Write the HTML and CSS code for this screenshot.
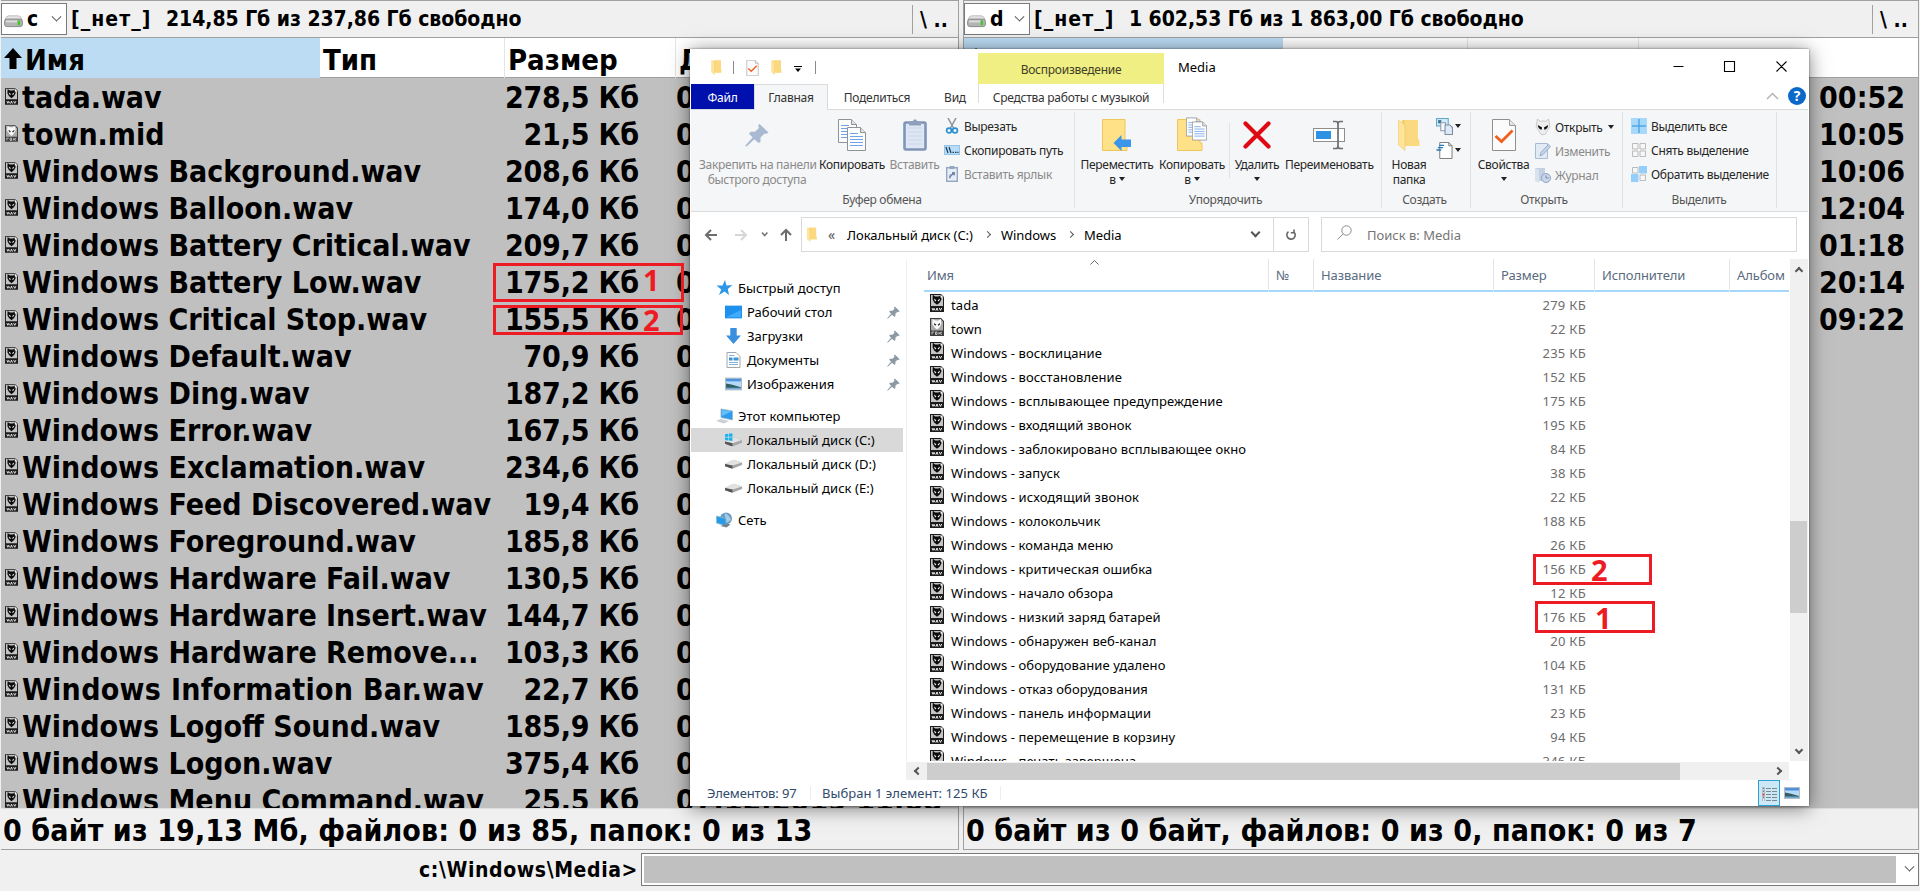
FILE: index.html
```html
<!DOCTYPE html>
<html lang="ru">
<head>
<meta charset="utf-8">
<title>Media</title>
<link rel="stylesheet" href="styles.css">
</head>
<body>
<svg class="defs" width="0" height="0">
  <symbol id="i-wav" viewBox="0 0 14 18">
    <path d="M0 0H11L14 3V18H0Z" fill="#1c1c1c"/><path d="M1 1H10.5L13 3.5V12H1Z" fill="#c4c4c4"/>
    <path d="M2.8 .8L5.2 2.6H8.8L11 .8L11.4 5.500L9.800 8.500L7 10.800L4.200 8.500L2.600 5.500Z" fill="#0c0c0c"/>
    <path d="M4 4.6L6.3 6.2L5.8 7.4L4.600 6.6ZM10 4.6L7.7 6.2L8.2 7.4L9.400 6.6Z" fill="#eee"/><path d="M10.5 0.5V3.5H13.5Z" fill="#fff"/>
    <path d="M2 14L3 16.300L4 14.300L5 16.300M6 16.6L7 14L8 16.6M9.3 14L10.5 16.4L11.7 14" fill="none" stroke="#eee"/>
  </symbol>
  <symbol id="i-mid" viewBox="0 0 14 18">
    <path d="M0 0H11L14 3V18H0Z" fill="#3c3c3c"/><path d="M1 1H10.5L13 3.5V12.500H1Z" fill="#a9a9a9"/>
    <path d="M2.6 1L5.4 2.4H8.2L11 1L11.4 6L9.4 9.4L7 11.6L4.6 9.4L2.2 6Z" fill="#f8f8f8"/>
    <path d="M3.8 5L6.3 6.600L5.4 7.800L4.200 6.8ZM10.2 5L7.7 6.600L8.4 7.800L9.800 6.8Z" fill="#222"/>
    <path d="M2 16.5V14H4M5.5 14H7V16.5H5.5V14M9 14V16.5M12 14L9.5 15.3L12 16.5" fill="none" stroke="#ccc" stroke-width=".9"/>
  </symbol>
  <symbol id="i-drive" viewBox="0 0 20 16">
    <path d="M1 7Q2 3 5 3H15Q18 3 19 7Z" fill="#e4e4e4" stroke="#bbb"/><rect x="0.5" y="6.5" width="19" height="8" rx="2.500" fill="#b4b4b4" stroke="#858585"/><path d="M2 8H14V10H2Z" fill="#ddd"/><rect x="14.500" y="8" width="2.500" height="5" fill="#40c828"/>
  </symbol>
  <symbol id="i-folder" viewBox="0 0 22 32">
    <path d="M4 1H20V26H4Z" fill="#f5cf6a"/><path d="M7 1H20V20L21.5 21V27H7Z" fill="#fbd980"/><path d="M0.5 1L7 6V31.5L0.5 26Z" fill="#ffe49a" stroke="#efc766" stroke-width=".6"/>
  </symbol>
  <symbol id="i-doccheck" viewBox="0 0 24 32">
    <path d="M.5 .5H17.5L23.5 6.5V31.5H.5Z" fill="#fbfbfb" stroke="#8f8f8f"/><path d="M17.5 .5V6.5H23.5" fill="#e5e5e5" stroke="#9a9a9a"/><path d="M3.5 17L9.5 22.5L20.5 11.5" fill="none" stroke="#f0601c" stroke-width="2.8"/>
  </symbol>
  <symbol id="i-page" viewBox="0 0 19 24">
    <path d="M.5 .5H13.5L18.5 5.5V23.5H.5Z" fill="#fdfdfd" stroke="#8f9296"/><path d="M13.5 .5V5.5H18.5" fill="#e2e2e2" stroke="#8f9296"/><path d="M3 6.5H11M3 9.5H16M3 12.5H16M3 15.5H16M3 18.5H16" stroke="#6ea4e8"/>
  </symbol>
  <symbol id="i-pages" viewBox="0 0 28 32">
    <use href="#i-page" x="0" y="0" width="19" height="24"/><use href="#i-page" x="9" y="8" width="19" height="24"/>
  </symbol>
  <symbol id="i-pin" viewBox="0 0 24 24">
    <path d="M14.5 1L23.5 9.5L21 11L19.5 10.5L15.5 14.5L15.5 19L13.5 20L9.3 16.2L1.5 23.5L.5 23.2L.8 22L7.6 14.5L4 10.8L5.5 8.8L10 8.8L14 5L13 2.5Z"/>
  </symbol>
  <symbol id="i-clip" viewBox="0 0 24 32">
    <rect x="1.5" y="3.5" width="21" height="27" rx="1.5" fill="#dde6f4" stroke="#8094b8" stroke-width="2.6"/><path d="M5 9H19M5 13H19M5 17H19M5 21H19M5 25H19" stroke="#c9d5e9"/><path d="M6 2.5H9.5L11 .5H13L14.5 2.5H18V6.5H6Z" fill="#8f9fba"/>
  </symbol>
  <symbol id="i-sciss" viewBox="0 0 16 16">
    <path d="M4 0L9.5 10M12 0L6.5 10" stroke="#8b9299" stroke-width="1.5"/><circle cx="5" cy="12.5" r="2.4" fill="none" stroke="#2d90d0" stroke-width="1.7"/><circle cx="11" cy="12.5" r="2.4" fill="none" stroke="#2d90d0" stroke-width="1.7"/>
  </symbol>
  <symbol id="i-path" viewBox="0 0 16 10"><rect x=".5" y=".5" width="15" height="9" fill="#b6dcf8" stroke="#94c4e8"/><path d="M2 2L4 8M5 2L7 8M8.5 7.3H10M11 7.3H12.5M13.3 7.3H14.5" stroke="#1d3b58" stroke-width="1.2"/></symbol>
  <symbol id="i-link" viewBox="0 0 12 16"><rect x=".7" y="1.7" width="10.6" height="13.6" fill="#e6edf7" stroke="#94a6c0" stroke-width="1.4"/><path d="M3.5 0H8.5V3H3.5Z" fill="#94a6c0"/><path d="M3 12Q3 8 6 8V6H9V9.5L7.6 9Q5 9 4.5 12.500Z" fill="#7387ab"/></symbol>
  <symbol id="i-move" viewBox="0 0 30 32"><path d="M.5 .5H23V24H25V31.5H.5Z" fill="#ffe188" stroke="#edc65c"/><path d="M11.500 24L19.500 16V20.500H29V28H19.500V32Z" fill="#3a96e8"/></symbol>
  <symbol id="i-copyto" viewBox="0 0 30 34"><path d="M.5 2.500H23V26H25V33.500H.5Z" fill="#ffe188" stroke="#edc65c"/><use href="#i-page" x="9" y="0" width="15" height="20"/><use href="#i-page" x="15" y="4" width="15" height="20"/></symbol>
  <symbol id="i-del" viewBox="0 0 28 28"><path d="M2.500 2.500L25.500 25.500M25.500 2.500L2.500 25.500" stroke="#dd0a14" stroke-width="4.200" stroke-linecap="round"/></symbol>
  <symbol id="i-ren" viewBox="0 0 32 30"><rect x=".5" y="8.500" width="31" height="13" fill="#fff" stroke="#8e8e8e"/><rect x="3" y="11" width="15" height="8" fill="#2e91e2"/><path d="M25 3V27M20 1.500H23Q25 1.500 25 4Q25 1.500 27 1.500H30M20 28.500H23Q25 28.500 25 26Q25 28.500 27 28.500H30" stroke="#6d6d6d" stroke-width="1.700" fill="none"/></symbol>
  <symbol id="i-new1" viewBox="0 0 16 16"><rect x=".5" y=".5" width="11" height="7" fill="#d3ecf9" stroke="#5fa6c8"/><rect x="2" y="2" width="3" height="3" fill="#39748c"/><path d="M4.500 4.500H9V12H4.500Z" fill="#f6fafd" stroke="#8a9cad"/><path d="M8.500 6.500H13L15.500 9V15.500H8.500Z" fill="#dbe9fb" stroke="#828c99"/></symbol>
  <symbol id="i-new2" viewBox="0 0 17 18"><path d="M3.500 .5H13L16.500 4V17.500H3.500Z" fill="#fff" stroke="#777"/><path d="M13 .5V4H16.500" fill="none" stroke="#777"/><path d="M3 3.500H8M1.500 6H7M0 8.500H5" stroke="#2877b6" stroke-width="1.400"/></symbol>
  <symbol id="i-alien" viewBox="0 0 15 17"><path d="M1.500 0L4.500 2.500Q7.500 1.500 10.500 2.500L13.500 0L14.800 8L12 12.500L9.500 16.500H5.500L3 12.500L.2 8Z" fill="#eee" stroke="#aaa" stroke-width=".6"/><path d="M2 6.500L6.500 9L6 11.500Q2.500 11 2 6.500ZM13 6.500L8.500 9L9 11.500Q12.500 11 13 6.500Z" fill="#111"/></symbol>
  <symbol id="i-edit" viewBox="0 0 16 16"><path d="M.5 .5H12.500V15.500H.5Z" fill="#e2eaf5" stroke="#a9bad4"/><path d="M5 13L6 9.500L13.500 1.500L15.500 3.500L8 11.500Z" fill="#c8d5e8" stroke="#95aac9"/></symbol>
  <symbol id="i-hist" viewBox="0 0 16 16"><path d="M0 1H10V14H0Z" fill="#c3cfe2"/><path d="M0 1L4 3V16L0 14Z" fill="#d9e2ef"/><circle cx="11" cy="11" r="4.500" fill="#c9d6ea" stroke="#8fa3c3"/><path d="M11 8.500V11H13.500" stroke="#7388ad" fill="none"/></symbol>
  <symbol id="i-selall" viewBox="0 0 16 16"><path d="M0 0H16V16H0Z" fill="#a8d9fb"/><path d="M8 1V15M1 8H15" stroke="#4fa6e4" stroke-width="1.400"/></symbol>
  <symbol id="i-selnone" viewBox="0 0 16 16"><path d="M1.500 1.500H7V7H1.500ZM9 1.500H14.500V7H9ZM1.500 9H7V14.500H1.500ZM9 9H14.500V14.500H9Z" fill="#f7f7f7" stroke="#bbb"/></symbol>
  <symbol id="i-selinv" viewBox="0 0 16 16"><path d="M1.500 1.500H7V7H1.500ZM9 9H14.500V14.500H9Z" fill="#f7f7f7" stroke="#bbb"/><path d="M8 0H16V7.500H8ZM0 8H7.500V16H0Z" fill="#93cffa"/></symbol>
  <symbol id="i-star" viewBox="0 0 16 16"><path d="M8.500 0L10 5.500L16 5L11.300 9L12.500 15L8 11.500L2.500 15L4.700 9.500L0 5.500L6 5.500Z" fill="#2f97e8"/></symbol>
  <symbol id="i-desk" viewBox="0 0 16 12"><rect width="16" height="12" fill="#1e90ee"/><path d="M1 11L15 4V11Z" fill="#40aafc"/></symbol>
  <symbol id="i-down" viewBox="0 0 14 15"><path d="M4 0H10V7H14L7 15L0 7H4Z" fill="#3a8fde"/></symbol>
  <symbol id="i-docs" viewBox="0 0 14 16"><path d="M.5 .5H9.500L13.500 4.500V15.500H.5Z" fill="#fff" stroke="#a0a7ad"/><path d="M2.500 3.500H8M2.500 10.500H11.500M2.500 12.500H11.500" stroke="#86b3dc"/><path d="M2.500 5.500H6V8.500H2.500ZM7 5.500H12V8.500H7Z" fill="#3e93d0"/></symbol>
  <symbol id="i-pics" viewBox="0 0 16 12"><rect x=".5" y=".5" width="15" height="11" fill="#b4daf8" stroke="#b6bcc3"/><path d="M1 1H15V3.500H1Z" fill="#4e91dc"/><path d="M1 5.500L6 6.500L15 9V10H1Z" fill="#315f63"/><path d="M1 9.500H15V11H1Z" fill="#70a9d4"/></symbol>
  <symbol id="i-pc" viewBox="0 0 17 16"><path d="M5 1L16.500 3V12L5 9.500Z" fill="#2d9cec" stroke="#9db5c9" stroke-width=".8"/><path d="M6 2L15.500 3.500L6 8Z" fill="#63c0fb"/><path d="M0 13L5 11L13 13L8 15.500Z" fill="#c9cfd4"/></symbol>
  <symbol id="i-disk" viewBox="0 0 16 9"><path d="M0 4.500L8 .5L16 3V5.500L7 9L0 6.500Z" fill="#a6a6a6"/><path d="M0 4.500L8 .5L16 3L7 6Z" fill="#e3e3e3"/><path d="M0 4.500L7 6V9L0 6.500Z" fill="#555"/></symbol>
  <symbol id="i-diskc" viewBox="0 0 16 12"><use href="#i-disk" y="3" width="16" height="9"/><path d="M0 .6L3 .2V3H0ZM3.600 .1L7 -.3V3H3.600ZM0 3.600H3V6.400L0 6ZM3.600 3.600H7V7L3.600 6.500Z" fill="#16b4ee"/></symbol>
  <symbol id="i-net" viewBox="0 0 16 16"><circle cx="9.500" cy="6.500" r="6" fill="#6a9cc4"/><path d="M8 1Q13 3 14.500 8L10 11Z" fill="#a6cbe2"/><path d="M0 4L9.500 6.500V14L0 11Z" fill="#299ae8" stroke="#8db9d9" stroke-width=".8"/><path d="M4 14L10 15.500L14 12.500L10 11.500Z" fill="#75828d"/></symbol>
</svg>

<main class="desktop">
  <section class="panel">
    <div class="drivebar"><div class="drive"><svg><use href="#i-drive"/></svg><b>c</b><i class="chev"></i></div><span class="label">[_нет_]</span><span class="free">214,85 Гб из 237,86 Гб свободно</span><span class="root">\&nbsp;<span class="up">..</span></span></div>
    <div class="heads"><span class="on"><svg class="sort" viewBox="0 0 18 21"><path d="M9 0L18 10H12.500V21H5.500V10H0Z"/></svg>Имя</span><span>Тип</span><span>Размер</span><span>Дата</span></div>
    <div class="files">
      <div class="file"><svg><use href="#i-wav"/></svg><span>tada.wav</span><span class="size">278,5 Кб</span><span class="date">07.12.2019 11:08</span></div>
      <div class="file"><svg><use href="#i-mid"/></svg><span>town.mid</span><span class="size">21,5 Кб</span><span class="date">07.12.2019 11:08</span></div>
      <div class="file"><svg><use href="#i-wav"/></svg><span>Windows Background.wav</span><span class="size">208,6 Кб</span><span class="date">07.12.2019 11:08</span></div>
      <div class="file"><svg><use href="#i-wav"/></svg><span>Windows Balloon.wav</span><span class="size">174,0 Кб</span><span class="date">07.12.2019 11:08</span></div>
      <div class="file"><svg><use href="#i-wav"/></svg><span>Windows Battery Critical.wav</span><span class="size">209,7 Кб</span><span class="date">07.12.2019 11:08</span></div>
      <div class="file"><svg><use href="#i-wav"/></svg><span>Windows Battery Low.wav</span><span class="size">175,2 Кб</span><span class="date">07.12.2019 11:08</span></div>
      <div class="file"><svg><use href="#i-wav"/></svg><span>Windows Critical Stop.wav</span><span class="size">155,5 Кб</span><span class="date">07.12.2019 11:08</span></div>
      <div class="file"><svg><use href="#i-wav"/></svg><span>Windows Default.wav</span><span class="size">70,9 Кб</span><span class="date">07.12.2019 11:08</span></div>
      <div class="file"><svg><use href="#i-wav"/></svg><span>Windows Ding.wav</span><span class="size">187,2 Кб</span><span class="date">07.12.2019 11:08</span></div>
      <div class="file"><svg><use href="#i-wav"/></svg><span>Windows Error.wav</span><span class="size">167,5 Кб</span><span class="date">07.12.2019 11:08</span></div>
      <div class="file"><svg><use href="#i-wav"/></svg><span>Windows Exclamation.wav</span><span class="size">234,6 Кб</span><span class="date">07.12.2019 11:08</span></div>
      <div class="file"><svg><use href="#i-wav"/></svg><span>Windows Feed Discovered.wav</span><span class="size">19,4 Кб</span><span class="date">07.12.2019 11:08</span></div>
      <div class="file"><svg><use href="#i-wav"/></svg><span>Windows Foreground.wav</span><span class="size">185,8 Кб</span><span class="date">07.12.2019 11:08</span></div>
      <div class="file"><svg><use href="#i-wav"/></svg><span>Windows Hardware Fail.wav</span><span class="size">130,5 Кб</span><span class="date">07.12.2019 11:08</span></div>
      <div class="file"><svg><use href="#i-wav"/></svg><span>Windows Hardware Insert.wav</span><span class="size">144,7 Кб</span><span class="date">07.12.2019 11:08</span></div>
      <div class="file"><svg><use href="#i-wav"/></svg><span>Windows Hardware Remove...</span><span class="size">103,3 Кб</span><span class="date">07.12.2019 11:08</span></div>
      <div class="file"><svg><use href="#i-wav"/></svg><span class="wide">Windows Information Bar.wav</span><span class="size">22,7 Кб</span><span class="date">07.12.2019 11:08</span></div>
      <div class="file"><svg><use href="#i-wav"/></svg><span>Windows Logoff Sound.wav</span><span class="size">185,9 Кб</span><span class="date">07.12.2019 11:08</span></div>
      <div class="file"><svg><use href="#i-wav"/></svg><span>Windows Logon.wav</span><span class="size">375,4 Кб</span><span class="date">07.12.2019 11:08</span></div>
      <div class="file"><svg><use href="#i-wav"/></svg><span>Windows Menu Command.wav</span><span class="size">25,5 Кб</span><span class="date">07.12.2019 11:08</span></div>
    </div>
    <div class="total">0 байт из 19,13 Мб, файлов: 0 из 85, папок: 0 из 13</div>
  </section>
  <section class="panel">
    <div class="drivebar"><div class="drive"><svg><use href="#i-drive"/></svg><b>d</b><i class="chev"></i></div><span class="label">[_нет_]</span><span class="free">1 602,53 Гб из 1 863,00 Гб свободно</span><span class="root">\&nbsp;<span class="up">..</span></span></div>
    <div class="heads"><span class="on"><svg class="sort" viewBox="0 0 18 21"><path d="M9 0L18 10H12.500V21H5.500V10H0Z"/></svg>Имя</span><span>Тип</span><span>Размер</span><span>Дата</span></div>
    <div class="files times"><span>00:52</span><span>10:05</span><span>10:06</span><span>12:04</span><span>01:18</span><span>20:14</span><span>09:22</span></div>
    <div class="total">0 байт из 0 байт, файлов: 0 из 0, папок: 0 из 7</div>
  </section>
  <footer class="cmd"><span>c:\Windows\Media&gt;</span><div class="input"><i class="chev"></i></div></footer>
</main>

<section class="window">
  <header class="title">
    <div class="quick"><svg class="qf"><use href="#i-folder"/></svg><i></i><svg class="qd"><use href="#i-doccheck"/></svg><svg class="qf"><use href="#i-folder"/></svg><svg class="qc" viewBox="0 0 8 6"><path d="M0 .5H8" stroke="#000"/><path d="M1 2.500H7L4 6Z"/></svg><i></i></div>
    <div class="context">Воспроизведение</div>
    <div class="name">Media</div>
    <svg class="sysbtns" viewBox="0 0 134 34"><path d="M.5 17.500H10.500M51.500 12.500H61.500V22.500H51.500ZM103.500 12.500L113.500 22.500M113.500 12.500L103.500 22.500" fill="none" stroke="#000" stroke-width="1.100"/></svg>
  </header>
  <nav class="tabs">
    <span class="tfile">Файл</span><span class="thome">Главная</span><span class="tshare">Поделиться</span><span class="tview">Вид</span><span class="tmusic">Средства работы с музыкой</span>
    <svg class="help" viewBox="0 0 40 20"><path d="M1 13L6.500 7.500L12 13" fill="none" stroke="#b5b5b5" stroke-width="1.500"/><circle cx="31" cy="10" r="9" fill="#0a68c8"/><text x="31" y="15" text-anchor="middle">?</text></svg>
  </nav>
  <div class="ribbon">
    <div class="group g1">
      <div class="tools">
        <div class="big off"><svg class="pin"><use href="#i-pin"/></svg>Закрепить на панели<br>быстрого доступа</div>
        <div class="big"><svg class="w28"><use href="#i-pages"/></svg>Копировать</div>
        <div class="big off"><svg class="w24"><use href="#i-clip"/></svg>Вставить</div>
        <div class="small"><span><svg><use href="#i-sciss"/></svg>Вырезать</span><span><svg><use href="#i-path"/></svg>Скопировать путь</span><span class="off"><svg><use href="#i-link"/></svg>Вставить ярлык</span></div>
      </div>
      <div class="caption">Буфер обмена</div>
    </div>
    <div class="group g2">
      <div class="tools">
        <div class="big"><svg class="w30"><use href="#i-move"/></svg>Переместить<br>в <i class="tri"></i></div>
        <div class="big"><svg class="w30 tall"><use href="#i-copyto"/></svg>Копировать<br>в <i class="tri"></i></div>
        <div class="big split"><svg class="w28"><use href="#i-del"/></svg>Удалить<br><i class="tri"></i></div>
        <div class="big"><svg class="w32"><use href="#i-ren"/></svg>Переименовать</div>
      </div>
      <div class="caption">Упорядочить</div>
    </div>
    <div class="group g3">
      <div class="tools">
        <div class="big"><svg class="w22"><use href="#i-folder"/></svg>Новая<br>папка</div>
        <div class="mini"><span><svg><use href="#i-new1"/></svg><i class="tri"></i></span><span><svg><use href="#i-new2"/></svg><i class="tri"></i></span></div>
      </div>
      <div class="caption">Создать</div>
    </div>
    <div class="group g4">
      <div class="tools">
        <div class="big"><svg class="w24"><use href="#i-doccheck"/></svg>Свойства<br><i class="tri"></i></div>
        <div class="small"><span><svg><use href="#i-alien"/></svg>Открыть <i class="tri"></i></span><span class="off"><svg><use href="#i-edit"/></svg>Изменить</span><span class="off"><svg><use href="#i-hist"/></svg>Журнал</span></div>
      </div>
      <div class="caption">Открыть</div>
    </div>
    <div class="group g5">
      <div class="tools">
        <div class="small"><span><svg><use href="#i-selall"/></svg>Выделить все</span><span><svg><use href="#i-selnone"/></svg>Снять выделение</span><span><svg><use href="#i-selinv"/></svg>Обратить выделение</span></div>
      </div>
      <div class="caption">Выделить</div>
    </div>
  </div>
  <div class="address">
    <svg class="arrows" viewBox="0 0 110 34" fill="none" stroke-width="2"><path d="M26 18H15M20 13L15 18L20 23" stroke="#6d6d6d"/><path d="M44 18H55M50 13L55 18L50 23" stroke="#d6d6d6"/><path d="M71 15.500L73.700 18.500L76.400 15.500" stroke="#777" stroke-width="1.600"/><path d="M95 24V13M90 18L95 13L100 18" stroke="#6d6d6d"/></svg>
    <div class="crumbs"><svg><use href="#i-folder"/></svg><span class="laq">«</span><span class="c1">Локальный диск (C:)</span><i class="r"></i><span class="c2">Windows</span><i class="r"></i><span class="c3">Media</span><i class="d"></i></div>
    <div class="reload"><svg viewBox="0 0 12 12"><path d="M8.500 2.600A4.200 4.200 0 1 1 3 3M3 .5V3.800H6.200" transform="matrix(-1 0 0 1 12 0)" fill="none" stroke="#666" stroke-width="1.600"/></svg></div>
    <div class="search"><svg viewBox="0 0 15 15"><circle cx="9.500" cy="5.500" r="4.700" fill="none" stroke="#8a8a8a"/><path d="M6 9L.5 14.500" stroke="#8a8a8a"/></svg>Поиск в: Media</div>
  </div>
  <div class="content">
    <aside class="tree">
      <div class="node"><svg><use href="#i-star"/></svg>Быстрый доступ</div>
      <div class="node sub"><svg><use href="#i-desk"/></svg>Рабочий стол<svg class="pinned"><use href="#i-pin"/></svg></div>
      <div class="node sub"><svg><use href="#i-down"/></svg>Загрузки<svg class="pinned"><use href="#i-pin"/></svg></div>
      <div class="node sub"><svg><use href="#i-docs"/></svg>Документы<svg class="pinned"><use href="#i-pin"/></svg></div>
      <div class="node sub"><svg><use href="#i-pics"/></svg>Изображения<svg class="pinned"><use href="#i-pin"/></svg></div>
      <div class="node gap"><svg><use href="#i-pc"/></svg>Этот компьютер</div>
      <div class="node sub sel"><svg><use href="#i-diskc"/></svg>Локальный диск (C:)</div>
      <div class="node sub"><svg><use href="#i-disk"/></svg>Локальный диск (D:)</div>
      <div class="node sub"><svg><use href="#i-disk"/></svg>Локальный диск (E:)</div>
      <div class="node gap"><svg><use href="#i-net"/></svg>Сеть</div>
    </aside>
    <div class="list">
      <div class="cols"><span>Имя<svg class="asc" viewBox="0 0 9 6"><path d="M.5 5.500L4.500 1.500L8.500 5.500" fill="none" stroke="#666"/></svg></span><span>№</span><span>Название</span><span>Размер</span><span>Исполнители</span><span>Альбом</span></div>
      <div class="rows">
        <div class="row"><svg><use href="#i-wav"/></svg><span>tada</span><span class="kb">279 КБ</span></div>
        <div class="row"><svg><use href="#i-mid"/></svg><span>town</span><span class="kb">22 КБ</span></div>
        <div class="row"><svg><use href="#i-wav"/></svg><span>Windows - восклицание</span><span class="kb">235 КБ</span></div>
        <div class="row"><svg><use href="#i-wav"/></svg><span>Windows - восстановление</span><span class="kb">152 КБ</span></div>
        <div class="row"><svg><use href="#i-wav"/></svg><span>Windows - всплывающее предупреждение</span><span class="kb">175 КБ</span></div>
        <div class="row"><svg><use href="#i-wav"/></svg><span>Windows - входящий звонок</span><span class="kb">195 КБ</span></div>
        <div class="row"><svg><use href="#i-wav"/></svg><span>Windows - заблокировано всплывающее окно</span><span class="kb">84 КБ</span></div>
        <div class="row"><svg><use href="#i-wav"/></svg><span>Windows - запуск</span><span class="kb">38 КБ</span></div>
        <div class="row"><svg><use href="#i-wav"/></svg><span>Windows - исходящий звонок</span><span class="kb">22 КБ</span></div>
        <div class="row"><svg><use href="#i-wav"/></svg><span>Windows - колокольчик</span><span class="kb">188 КБ</span></div>
        <div class="row"><svg><use href="#i-wav"/></svg><span>Windows - команда меню</span><span class="kb">26 КБ</span></div>
        <div class="row"><svg><use href="#i-wav"/></svg><span>Windows - критическая ошибка</span><span class="kb">156 КБ</span></div>
        <div class="row"><svg><use href="#i-wav"/></svg><span>Windows - начало обзора</span><span class="kb">12 КБ</span></div>
        <div class="row"><svg><use href="#i-wav"/></svg><span>Windows - низкий заряд батарей</span><span class="kb">176 КБ</span></div>
        <div class="row"><svg><use href="#i-wav"/></svg><span>Windows - обнаружен веб-канал</span><span class="kb">20 КБ</span></div>
        <div class="row"><svg><use href="#i-wav"/></svg><span>Windows - оборудование удалено</span><span class="kb">104 КБ</span></div>
        <div class="row"><svg><use href="#i-wav"/></svg><span>Windows - отказ оборудования</span><span class="kb">131 КБ</span></div>
        <div class="row"><svg><use href="#i-wav"/></svg><span>Windows - панель информации</span><span class="kb">23 КБ</span></div>
        <div class="row"><svg><use href="#i-wav"/></svg><span>Windows - перемещение в корзину</span><span class="kb">94 КБ</span></div>
        <div class="row"><svg><use href="#i-wav"/></svg><span>Windows - печать завершена</span><span class="kb">346 КБ</span></div>
      </div>
      <div class="hscroll"><i class="l"></i><b></b><i class="r"></i></div>
    </div>
    <div class="vscroll"><i class="u"></i><b></b><i class="d"></i></div>
  </div>
  <footer class="status"><span class="s1">Элементов: 97</span><span class="s2">Выбран 1 элемент: 125 КБ</span><div class="views"><span class="von"><svg viewBox="0 0 16 16"><path d="M1.500 1V15M3.500 1V15" stroke="#b9bec2" stroke-width="1"/><path d="M2.500 1.500V3M2.500 4.500V6M2.500 10.500V12" stroke="#777"/><path d="M2.500 7.500V9.500" stroke="#e04a30" stroke-width="2"/><path d="M5 2.500H10M11 2.500H16M5 5.500H10M11 5.500H16M5 8.500H10M11 8.500H16M5 11.500H10M11 11.500H16M5 14.500H10M11 14.500H16" stroke="#7c8a92"/></svg></span><svg class="vpic"><use href="#i-pics"/></svg></div></footer>
</section>

<div class="mark m1">1</div>
<div class="mark m2">2</div>
<div class="mark m3">2</div>
<div class="mark m4">1</div>
</body>
</html>
```
FILE: styles.css
```css
* { box-sizing: border-box; }
html, body { margin: 0; height: 891px; overflow: hidden; }
body { background: #f0f0f0; font-family: "Noto Sans", sans-serif; position: relative; white-space: nowrap; }
i { font-style: normal; }
svg { display: block; flex: none; }
.defs { position: absolute; }

/* file manager */
.desktop { display: grid; grid-template-columns: 958px 956px; column-gap: 4px; grid-template-rows: 850px 41px; padding-left: 1px; font-family: "DejaVu Sans Condensed", "DejaVu Sans", sans-serif; font-stretch: condensed; font-weight: bold; color: #000; }
.panel { border: 1px solid #a0a0a0; display: flex; flex-direction: column; overflow: hidden; }
.panel:first-child { border-left: 0; }
.drivebar { height: 36px; display: flex; align-items: center; font-size: 21px; position: relative; line-height: 30px; }
.drive { width: 66px; height: 32px; border: 1px solid #7a7a7a; background: #fff; display: flex; align-items: center; padding-left: 2px; }
.drive svg { width: 19px; height: 15px; margin-right: 4px; margin-top: 2px; }
.drive b { width: 26px; }
.chev { width: 7px; height: 7px; border: solid #555; border-width: 0 1px 1px 0; transform: rotate(45deg) translate(-2px, -2px); }
.label { margin-left: 4px; width: 95px; letter-spacing: 1.050px; }
.free { letter-spacing: -.05px; }
.root { margin-left: auto; border-left: 1px solid #a0a0a0; height: 29px; width: 46px; padding-left: 7px; font-weight: bold; }
.heads { height: 41px; border: solid #a0a0a0; border-width: 1px 0; background: #fff; display: grid; grid-template-columns: 319px 184px 171px 1fr; font-size: 29px; line-height: 44px; }
.heads span { padding-left: 3px; border-left: 1px solid #e5e5e5; display: flex; }
.heads span:nth-child(2) { border: 0; padding-left: 3px; }
.heads .on { background: #bcdcf4; border: 0; padding-left: 3px; }
.sort { width: 18px; height: 21px; margin: 10px 3px 0 0; }
.files { flex: 1; background: #c0c0c0; overflow: hidden; font-size: 30px; }
.file { height: 37px; line-height: 39px; display: grid; grid-template-columns: 17px 464px 158px 1fr; padding-left: 4px; }
.file svg { width: 13px; height: 17px; margin-top: 10px; }
.file .wide { letter-spacing: .3px; }
.file .size { text-align: right; padding-right: 5px; letter-spacing: -.2px; }
.file .date { padding-left: 32px; }
.times { display: flex; flex-direction: column; align-items: flex-end; padding-right: 13px; }
.times span { height: 37px; line-height: 39px; }
.total { height: 41px; border-top: 1px solid #ddd; font-size: 30px; line-height: 44px; padding-left: 2px; letter-spacing: .1px; }
.cmd { grid-column: 1 / 3; display: flex; padding: 3px 0 0; }
.cmd > span { width: 641px; text-align: right; padding-right: 3px; font-size: 21px; letter-spacing: .6px; line-height: 34px; }
.input { width: 1278px; flex: none; height: 33px; border: 1px solid #7a7a7a; background: linear-gradient(#c0c0c0, #c0c0c0) 2px 2px / 1252px 27px no-repeat #fff; display: flex; align-items: center; justify-content: flex-end; padding-right: 5px; }

/* explorer window */
.window { position: absolute; left: 690px; top: 49px; width: 1119px; height: 757px; padding: 0 1px; background: #fff; box-shadow: 0 2px 18px rgba(0,0,0,.5), 0 0 2px rgba(0,0,0,.5); font-size: 13px; color: #000; }
.title { height: 35px; display: flex; }
.quick { width: 287px; display: flex; align-items: center; padding: 2px 0 0 20px; }
.quick i { width: 1px; height: 13px; background: #8a8a8a; margin-left: 11px; }
.qf { width: 11px; height: 15px; }
.qd { width: 13px; height: 16px; margin: 0 12px 0 12px; }
.qc { width: 8px; height: 6px; margin: 2px 2px 0 12px; }
.context { width: 186px; margin-top: 4px; background: #f0ef83; text-align: center; font-size: 12px; letter-spacing: -.25px; line-height: 33px; color: #3f3e28; }
.name { margin-left: 14px; line-height: 36px; width: 495px; }
.sysbtns { width: 134px; height: 34px; }
.tabs { height: 26px; display: flex; font-size: 12px; letter-spacing: -.25px; line-height: 27px; border-bottom: 1px solid #dadbdc; color: #333; }
.tabs span { text-align: center; }
.tfile { width: 63px; background: #0010ac; color: #fff; height: 25px; }
.tabs .thome { width: 74px; background: #f5f6f7; border: 1px solid #dadbdc; border-bottom: 0; height: 26px; line-height: 25px; }
.tshare { width: 98px; }
.tview { width: 52px; padding-left: 6px; }
.tmusic { width: 186px; border: 1px solid #ddd; border-width: 0 1px; height: 19px; }
.help { width: 40px; height: 20px; margin: 2px 0 0 602px; }
.help text { font: bold 14px "Open Sans", sans-serif; fill: #fff; }
.ribbon { height: 102px; background: #f5f6f7; border-bottom: 1px solid #dadbdc; display: flex; font-size: 12px; letter-spacing: -.3px; color: #333; padding-top: 2px; }
.group { height: 96px; border-right: 1px solid #e1e2e4; display: flex; flex-direction: column; }
.tools { height: 81px; display: flex; }
.caption { text-align: center; line-height: 17px; color: #555; }
.g1 { width: 384px; padding-left: 8px; } .g2 { width: 307px; padding-left: 4px; } .g3 { width: 89px; padding-left: 6px; } .g4 { width: 152px; padding-left: 4px; } .g5 { width: 154px; padding-left: 8px; }
.g1 .caption, .g2 .caption, .g3 .caption, .g4 .caption, .g5 .caption { margin-left: -9px; }
.big { line-height: 15px; color: #262626; text-align: center; }
.big > svg { height: 32px; margin: 7px auto 6px; }
.big > .tall { height: 34px; margin-top: 5px; }
.w22 { width: 22px; } .w24 { width: 24px; } .w28 { width: 28px; } .w30 { width: 30px; } .w32 { width: 32px; }
.big > .pin { width: 24px; height: 24px; fill: #a9b9d2; margin: 11px auto 10px; }
.off, .big.off { color: #8a8a8a; }
.tri { display: inline-block; border: 3px solid transparent; border-top: 4px solid #222; border-bottom: 0; vertical-align: 3px; }
.g1 .big:nth-child(1) { width: 116px; } .g1 .big:nth-child(2) { width: 74px; } .g1 .big:nth-child(3) { width: 51px; }
.g2 .big:nth-child(1) { width: 76px; } .g2 .big:nth-child(2) { width: 74px; } .g2 .big:nth-child(3) { width: 56px; } .g2 .big:nth-child(4) { width: 88px; }
.split { background: linear-gradient(#e1e2e4, #e1e2e4) 0 11px / 1px 55px no-repeat; }
.g3 .big { width: 42px; } .g4 .big { width: 57px; }
.small { display: flex; flex-direction: column; padding: 2px 0 0 4px; color: #262626; }
.small span { height: 24px; display: flex; align-items: center; }
.small svg { width: 16px; height: 16px; margin-right: 4px; }
.small .tri { margin-left: 5px; }
.g5 .small { padding-left: 0; } .g5 .small svg { margin-right: 4px; }
.g4 .small { padding: 3px 0 0 3px; }
.mini { padding: 6px 0 0 6px; } .mini span { display: flex; align-items: center; height: 24px; margin-top: -4px; margin-bottom: 4px; }
.mini svg { width: 17px; height: 17px; margin-right: 2px; }

.address { height: 47px; display: flex; padding-top: 5px; }
.arrows { width: 110px; height: 34px; }
.crumbs, .reload, .search { border: 1px solid #d9d9d9; height: 35px; display: flex; align-items: center; }
.crumbs { width: 473px; letter-spacing: -.05px; }
.crumbs > svg { width: 10px; height: 15px; margin: 0 11px 0 5px; }
.laq { width: 19px; color: #555; font-size: 14px; }
.c1 { width: 138px; } .c2 { width: 67px; } .c3 { width: 168px; }
i.r, i.d, i.u, i.l { width: 6px; height: 6px; border: solid #555; border-width: 2px 2px 0 0; }
i.r { transform: rotate(45deg); } i.d { transform: rotate(135deg); } i.u { transform: rotate(-45deg); } i.l { transform: rotate(-135deg); }
.crumbs i.r { width: 5px; height: 5px; margin-right: 11px; border-width: 1.500px 1.500px 0 0; }
.crumbs i.d { width: 7px; height: 7px; margin-top: -4px; }
.reload { width: 36px; border-left: 1px solid #d9d9d9; margin-left: -1px; justify-content: center; }
.reload svg { width: 12px; height: 12px; }
.search { margin-left: 12px; width: 476px; color: #757575; padding-left: 15px; }
.search svg { width: 15px; height: 15px; margin: -4px 15px 0 0; }

.content { height: 521px; display: flex; }
.tree { width: 216px; border-right: 1px solid #f0f0f0; padding-top: 17px; }
.node { height: 24px; line-height: 25px; display: flex; align-items: center; padding-left: 25px; width: 212px; letter-spacing: .04px; }
.node > svg { width: 17px; height: 16px; margin-right: 5px; }
.node.sub { padding-left: 34px; }
.node .pinned { width: 13px; height: 13px; fill: #8d9aa3; margin: 0 3px 0 auto; }
.gap { margin-top: 8px; }
.sel { background: #d9d9d9; }
.list { width: 882px; }
.cols { height: 33px; margin-left: 17px; border-bottom: 2px solid #a5d7fa; display: grid; grid-template-columns: 345px 45px 180px 101px 135px 60px; color: #5a6b80; line-height: 33px; }
.cols span { border-right: 1px solid #e5e5e5; padding-left: 7px; position: relative; letter-spacing: -.1px; }
.cols span:first-child { padding-left: 3px; }
.cols span:last-child { border: 0; }
.asc { position: absolute; left: 166px; top: 0; width: 9px; height: 6px; }
.rows { height: 469px; overflow: hidden; }
.row { height: 24px; display: grid; grid-template-columns: 21px 535px 100px; padding-left: 23px; line-height: 26px; letter-spacing: .1px; }
.row svg { width: 14px; height: 18px; margin-top: 2px; }
.row .kb { color: #6d6d6d; text-align: right; letter-spacing: .3px; }
.hscroll { height: 18px; margin-top: 1px; background: #f0f0f0; display: flex; align-items: center; padding: 0 8px 0 8px; }
.hscroll b { width: 753px; height: 17px; background: #cdcdcd; margin-left: 6px; margin-right: auto; }
.vscroll { height: 502px; width: 18px; margin-left: 1px; background: #f0f0f0; display: flex; flex-direction: column; align-items: center; padding: 9px 1px 8px 0; }
.vscroll b { width: 17px; height: 92px; background: #cdcdcd; margin: 247px 0 auto; }
.status { height: 26px; display: flex; align-items: center; color: #2f4a6d; padding-left: 16px; font-size: 13px; }
.status span { line-height: 14px; border-right: 1px solid #eee; }
.s1 { width: 104px; letter-spacing: -.1px; } .s2 { width: 190px; padding-left: 11px; letter-spacing: .05px; }
.views { margin-left: auto; display: flex; align-items: center; margin-right: 8px; }
.views .von { width: 22px; height: 26px; border: 1px solid #2a9fd8; background: #cce8f6; padding: 5px 2px; margin-right: 4px; }
.von svg { width: 16px; height: 16px; }
.vpic { width: 16px; height: 12px; }

/* red call-outs over both windows */
.mark { position: absolute; border: 3px solid #ed1c24; color: #ed1c24; font-weight: bold; font-size: 29px; line-height: 28px; }
.m1 { left: 493px; top: 263px; width: 191px; height: 39px; padding-left: 147px; line-height: 27px; }
.m2 { left: 493px; top: 305px; width: 190px; height: 30px; padding-left: 147px; line-height: 23px; }
.m3 { left: 1533px; top: 554px; width: 119px; height: 31px; padding-left: 55px; line-height: 26px; }
.m4 { left: 1535px; top: 601px; width: 120px; height: 32px; padding-left: 57px; line-height: 28px; }
```
